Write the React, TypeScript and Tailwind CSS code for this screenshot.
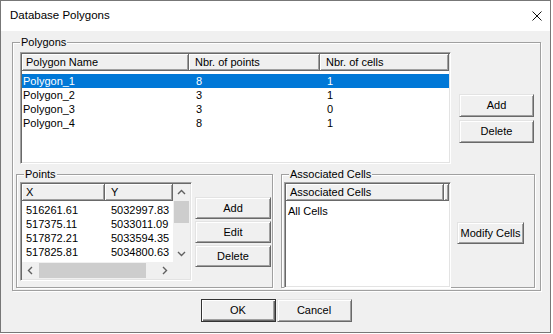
import type { ReactNode } from 'react';

const raised =
  'border border-t-[#e3e3e3] border-l-[#e3e3e3] border-r-[#696969] border-b-[#696969] shadow-[inset_1px_1px_0_#fff,inset_-1px_-1px_0_#a0a0a0]';

const sunken =
  'bg-white border border-t-[#a0a0a0] border-l-[#a0a0a0] border-r-white border-b-white p-[1px] shadow-[inset_1px_1px_0_#696969,inset_-1px_-1px_0_#e3e3e3]';

function Button({ children, className = '', isDefault = false }: { children: ReactNode; className?: string; isDefault?: boolean }) {
  return (
    <button
      className={`flex items-center justify-center bg-[#f0f0f0] text-black ${
        isDefault
          ? 'border border-[#333] shadow-[inset_1px_1px_0_#fff,inset_-1px_-1px_0_#696969,inset_-2px_-2px_0_#a0a0a0]'
          : raised
      } ${className}`}
    >
      {children}
    </button>
  );
}

function Group({ label, className = '', children }: { label: string; className?: string; children: ReactNode }) {
  return (
    <div className={`relative border border-[#a0a0a0] shadow-[inset_1px_1px_0_#fff,1px_1px_0_#fff] ${className}`}>
      <span className="absolute left-[7px] top-[-8px] px-[1px] bg-[#f0f0f0] leading-[14px]">{label}</span>
      {children}
    </div>
  );
}

function HeaderCell({ children, className = '' }: { children?: ReactNode; className?: string }) {
  return (
    <div
      className={`h-full flex items-center pl-[4px] bg-[#f0f0f0] border-r border-b border-r-[#696969] border-b-[#696969] shadow-[inset_1px_1px_0_#fff,inset_-1px_-1px_0_#a0a0a0] ${className}`}
    >
      {children}
    </div>
  );
}

function Chevron({ dir }: { dir: 'up' | 'down' | 'left' | 'right' }) {
  const d = {
    up: 'M1 5 L4.5 1.5 L8 5',
    down: 'M1 2 L4.5 5.5 L8 2',
    left: 'M5 1 L1.5 4.5 L5 8',
    right: 'M2 1 L5.5 4.5 L2 8',
  }[dir];
  const horiz = dir === 'left' || dir === 'right';
  return (
    <svg width={horiz ? 7 : 9} height={horiz ? 9 : 7} viewBox={horiz ? '0 0 7 9' : '0 0 9 7'}>
      <path d={d} fill="none" stroke="#606060" strokeWidth="1.4" />
    </svg>
  );
}

const polygons = [
  { name: 'Polygon_1', points: 8, cells: 1 },
  { name: 'Polygon_2', points: 3, cells: 1 },
  { name: 'Polygon_3', points: 3, cells: 0 },
  { name: 'Polygon_4', points: 8, cells: 1 },
];

const points = [
  ['516261.61', '5032997.83'],
  ['517375.11', '5033011.09'],
  ['517872.21', '5033594.35'],
  ['517825.81', '5034800.63'],
];

export default function App() {
  return (
    <div className="w-[553px] h-[334px] bg-white font-['Liberation_Sans',Arial,sans-serif] text-[11px] text-black">
      <div className="w-[551px] h-[333px] border border-[#777] bg-[#f0f0f0] flex flex-col">
        {/* Title bar */}
        <div className="h-[30px] shrink-0 bg-white flex items-center justify-between pl-[9px] pr-[8px]">
          <span className="text-[11.5px]">Database Polygons</span>
          <svg width="10" height="10" viewBox="0 0 10 10">
            <path d="M0.5 0.5 L9.5 9.5 M9.5 0.5 L0.5 9.5" stroke="#111" strokeWidth="1" />
          </svg>
        </div>

        <div className="flex-1 flex flex-col pl-[11px] pt-[11px]">
          <Group label="Polygons" className="w-[529px] h-[249px]">
            {/* Polygons list */}
            <div className="flex pl-[7px] pt-[9px]">
              <div className={`w-[431px] h-[112px] flex flex-col ${sunken}`}>
                <div className="h-[17px] flex shrink-0">
                  <HeaderCell className="w-[167px]">Polygon Name</HeaderCell>
                  <HeaderCell className="w-[131px] pl-[6px]">Nbr. of points</HeaderCell>
                  <HeaderCell className="w-[129px] pl-[6px]">Nbr. of cells</HeaderCell>
                </div>
                <div className="pt-[3px] flex flex-col">
                  {polygons.map((p, i) => (
                    <div key={p.name} className={`h-[14px] flex items-center ${i === 0 ? 'bg-[#0078d7] text-white' : ''}`}>
                      <span className="w-[167px] pl-[1px]">{p.name}</span>
                      <span className="w-[131px] pl-[7px]">{p.points}</span>
                      <span className="w-[129px] pl-[7px]">{p.cells}</span>
                    </div>
                  ))}
                </div>
              </div>
              <div className="ml-[8px] mt-[42px] flex flex-col gap-[3px]">
                <Button className="w-[75px] h-[23px]">Add</Button>
                <Button className="w-[75px] h-[23px]">Delete</Button>
              </div>
            </div>

            <div className="flex pl-[3px] mt-[10px] gap-[8px]">
              {/* Points */}
              <Group label="Points" className="w-[257px] h-[114px]">
                <div className="flex pl-[3px] pt-[7px]">
                  <div className={`w-[172px] h-[99px] flex ${sunken}`}>
                    <div className="w-[151px] flex flex-col">
                      <div className="h-[17px] flex shrink-0">
                        <HeaderCell className="w-[83px]">X</HeaderCell>
                        <HeaderCell className="w-[68px] pl-[6px]">Y</HeaderCell>
                      </div>
                      <div className="flex-1 pt-[2px] flex flex-col">
                        {points.map(([x, y]) => (
                          <div key={x} className="h-[14px] flex items-center">
                            <span className="w-[83px] pl-[4px]">{x}</span>
                            <span className="w-[68px] pl-[6px]">{y}</span>
                          </div>
                        ))}
                      </div>
                      <div className="h-[17px] shrink-0 bg-[#f0f0f0] flex items-center">
                        <div className="w-[17px] h-full flex items-center justify-center">
                          <Chevron dir="left" />
                        </div>
                        <div className="flex-1 h-full py-[1px] pr-[10px]">
                          <div className="w-[107px] h-full bg-[#cdcdcd]" />
                        </div>
                        <div className="w-[17px] h-full flex items-center justify-center">
                          <Chevron dir="right" />
                        </div>
                      </div>
                    </div>
                    <div className="w-[17px] flex flex-col bg-[#f0f0f0]">
                      <div className="h-[17px] flex items-center justify-center">
                        <Chevron dir="up" />
                      </div>
                      <div className="flex-1 px-[1px]">
                        <div className="h-[22px] bg-[#cdcdcd]" />
                      </div>
                      <div className="h-[17px] flex items-center justify-center">
                        <Chevron dir="down" />
                      </div>
                      <div className="h-[17px]" />
                    </div>
                  </div>
                  <div className="ml-[3px] mt-[15px] flex flex-col gap-[2px]">
                    <Button className="w-[76px] h-[22px]">Add</Button>
                    <Button className="w-[76px] h-[22px]">Edit</Button>
                    <Button className="w-[76px] h-[22px]">Delete</Button>
                  </div>
                </div>
              </Group>

              {/* Associated Cells */}
              <Group label="Associated Cells" className="w-[254px] h-[114px]">
                <div className="flex pl-[2px] pt-[7px]">
                  <div className={`w-[167px] h-[106px] flex flex-col ${sunken}`}>
                    <div className="h-[17px] flex shrink-0">
                      <HeaderCell className="w-[158px]">Associated Cells</HeaderCell>
                      <HeaderCell className="flex-1" />
                    </div>
                    <div className="pt-[3px]">
                      <div className="h-[14px] flex items-center pl-[2px]">All Cells</div>
                    </div>
                  </div>
                  <div className="ml-[6px] mt-[40px]">
                    <Button className="w-[67px] h-[22px]">Modify Cells</Button>
                  </div>
                </div>
              </Group>
            </div>
          </Group>

          <div className="flex justify-center pr-[10px] mt-[8px] gap-[1px]">
            <Button isDefault className="w-[75px] h-[23px]">OK</Button>
            <Button className="w-[75px] h-[23px]">Cancel</Button>
          </div>
        </div>
      </div>
    </div>
  );
}
